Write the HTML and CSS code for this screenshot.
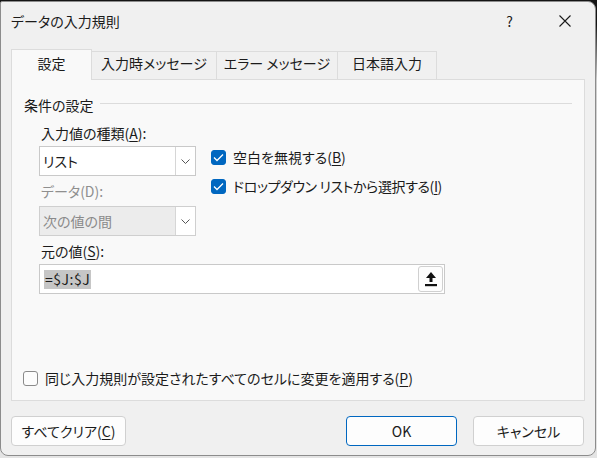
FILE: index.html
```html
<!DOCTYPE html>
<html lang="ja">
<head>
    <meta charset="UTF-8">
    <title>データの入力規則</title>
    <link rel="stylesheet" href="styles.css">
</head>
<body>
    <div class="window">
        <div class="titlebar">
            <span class="title">データの入力規則</span>
            <span class="help">?</span>
            <span class="close">
                <svg width="12" height="12" viewBox="0 0 12 12"><path d="M0.5 0.5 L11.5 11.5 M11.5 0.5 L0.5 11.5" stroke="#1a1a1a" stroke-width="1.1" fill="none"/></svg>
            </span>
        </div>

        <div class="tabs">
            <div class="tab active">設定</div>
            <div class="tab">入力時メッセージ</div>
            <div class="tab">エラー メッセージ</div>
            <div class="tab">日本語入力</div>
        </div>

        <div class="panel">
            <div class="group-head">
                <span>条件の設定</span>
                <div class="group-line"></div>
            </div>

            <div class="cond">
                <div class="cond-left">
                    <div class="label">入力値の種類(<u>A</u>):</div>
                    <div class="select">
                        <span class="select-text">リスト</span>
                        <span class="select-btn">
                            <svg width="9" height="5" viewBox="0 0 9 5"><path d="M0.5 0.5 L4.5 4.5 L8.5 0.5" stroke="#555" fill="none"/></svg>
                        </span>
                    </div>
                    <div class="label label-2 muted">データ(D):</div>
                    <div class="select disabled">
                        <span class="select-text">次の値の間</span>
                        <span class="select-btn">
                            <svg width="9" height="5" viewBox="0 0 9 5"><path d="M0.5 0.5 L4.5 4.5 L8.5 0.5" stroke="#555" fill="none"/></svg>
                        </span>
                    </div>
                </div>
                <div class="cond-right">
                    <label class="check">
                        <span class="box on">
                            <svg width="11" height="9" viewBox="0 0 11 9"><path d="M1 4.5 L4 7.5 L10 1.5" stroke="#fff" stroke-width="1.3" fill="none"/></svg>
                        </span>
                        空白を無視する(<u>B</u>)
                    </label>
                    <label class="check tight">
                        <span class="box on">
                            <svg width="11" height="9" viewBox="0 0 11 9"><path d="M1 4.5 L4 7.5 L10 1.5" stroke="#fff" stroke-width="1.3" fill="none"/></svg>
                        </span>
                        ドロップダウン リストから選択する(<u>I</u>)
                    </label>
                </div>
            </div>

            <div class="label label-3">元の値(<u>S</u>):</div>
            <div class="source">
                <span class="source-sel">=$J:$J</span>
                <span class="pick-btn">
                    <svg width="12" height="15" viewBox="0 0 12 15"><path d="M6 0 L11 6 L7.5 6 L7.5 10 L4.5 10 L4.5 6 L1 6 Z" fill="#111"/><rect x="0" y="12" width="12" height="2.2" fill="#111"/></svg>
                </span>
            </div>

            <label class="check apply">
                <span class="box"></span>
                同じ入力規則が設定されたすべてのセルに変更を適用する(<u>P</u>)
            </label>
        </div>

        <div class="footer">
            <button class="btn clear">すべてクリア(<u>C</u>)</button>
            <div class="spacer"></div>
            <button class="btn ok">OK</button>
            <button class="btn">キャンセル</button>
        </div>
    </div>
</body>
</html>
```

FILE: styles.css
```css
html, body {
    margin: 0;
    height: 100%;
}
body {
    background: linear-gradient(to bottom, #141414 0, #141414 24px, #cfcfcf 80px, #e4e4e4 100%);
    font-family: "Noto Sans CJK JP", "Noto Sans", sans-serif;
    font-size: 14px;
    font-feature-settings: "palt";
    color: #1b1b1b;
    overflow: hidden;
}
.window {
    box-sizing: border-box;
    margin: 1px 0 0 0;
    width: 596px;
    height: 455px;
    background: #f0f0f0;
    border: 1px solid #8c8c8c;
    border-radius: 2px 8px 8px 8px;
    padding: 0 11px 0 10px;
}
.titlebar {
    display: flex;
    align-items: center;
    height: 37px;
    padding-bottom: 1px;
}
.title {
    font-size: 14px;
    flex: 1;
}
.help {
    font-size: 14px;
    margin-right: 46px;
}
.close {
    display: flex;
    margin-right: 13px;
}

/* tab strip */
.tabs {
    display: flex;
    align-items: flex-end;
    height: 39px;
}
.tab {
    box-sizing: border-box;
    height: 28px;
    line-height: 22px;
    border: 1px solid #dcdcdc;
    border-bottom: none;
    border-left: none;
    background: #f0f0f0;
    text-align: center;
    white-space: nowrap;
}
.tab:nth-child(2) { width: 125px; }
.tab:nth-child(3) { width: 121px; }
.tab:nth-child(4) { width: 99px; }
.tab.active {
    width: 81px;
    height: 31px;
    line-height: 26px;
    border-left: 1px solid #dcdcdc;
    background: #f9f9f9;
    margin-bottom: -1px;
    position: relative;
}

.panel {
    box-sizing: border-box;
    height: 322px;
    width: 574px;
    background: #f9f9f9;
    border: 1px solid #dcdcdc;
    padding: 15px 12px 0 12px;
}
.group-head {
    display: flex;
    align-items: center;
    height: 20px;
    line-height: 20px;
}
.group-line {
    flex: 1;
    border-top: 1px solid #dcdcdc;
    margin: 0 0 3px 6px;
}

.cond {
    display: flex;
    margin-top: 8px;
    padding-left: 15px;
}
.cond-left {
    width: 157px;
}
.cond-right {
    margin-left: 15px;
    padding-top: 24px;
    display: flex;
    flex-direction: column;
    gap: 9px;
}
.label {
    height: 20px;
    line-height: 20px;
    padding-left: 2px;
}
.label.muted {
    color: #8f8f8f;
}
.label-2 { margin-top: 5px; }
.label-3 { margin: 5px 0 0 15px; }

.select {
    box-sizing: border-box;
    display: flex;
    height: 30px;
    margin-top: 3px;
    border: 1px solid #c9c9c9;
    background: #fff;
}
.select-text {
    flex: 1;
    line-height: 28px;
    padding-left: 3px;
}
.select-btn {
    width: 19px;
    border-left: 1px solid #d6d6d6;
    display: flex;
    align-items: center;
    justify-content: center;
    background: #fff;
}
.select.disabled {
    margin-top: 5px;
    background: #ececec;
    border-color: #cfcfcf;
}
.select.disabled .select-text {
    color: #8a8a8a;
}

.check {
    display: flex;
    align-items: center;
    height: 20px;
    line-height: 20px;
    white-space: nowrap;
}
.check.tight {
    letter-spacing: -0.4px;
}
.box {
    box-sizing: border-box;
    width: 15px;
    height: 15px;
    border-radius: 3px;
    border: 1px solid #8a8a8a;
    background: #fcfcfc;
    margin-right: 7px;
    display: flex;
    align-items: center;
    justify-content: center;
}
.box.on {
    background: #0067c0;
    border-color: #0067c0;
}

.source {
    box-sizing: border-box;
    display: flex;
    align-items: center;
    width: 406px;
    height: 30px;
    margin: 3px 0 0 15px;
    border: 1px solid #c9c9c9;
    background: #fff;
    padding: 0 1px 0 4px;
}
.source-sel {
    background: #c6c6c6;
    color: #1b1b1b;
    line-height: 19px;
    padding: 0 1px;
    letter-spacing: 0.5px;
}
.pick-btn {
    box-sizing: border-box;
    margin-left: auto;
    width: 25px;
    height: 26px;
    border: 1px solid #d0d0d0;
    border-radius: 3px;
    background: #fdfdfd;
    display: flex;
    align-items: center;
    justify-content: center;
}

.apply {
    margin-top: 74px;
    margin-left: -1px;
}

.footer {
    display: flex;
    margin-top: 15px;
    gap: 16px;
}
.spacer {
    flex: 1;
}
.btn {
    box-sizing: border-box;
    height: 30px;
    width: 111px;
    font-family: inherit;
    font-size: 14px;
    font-feature-settings: "palt";
    color: #1b1b1b;
    background: #fdfdfd;
    border: 1px solid #d0d0d0;
    border-radius: 4px;
    padding: 0;
}
.btn.clear {
    width: 115px;
}
.btn.ok {
    border-color: #0067c0;
}
u {
    text-underline-offset: 2px;
}
```
